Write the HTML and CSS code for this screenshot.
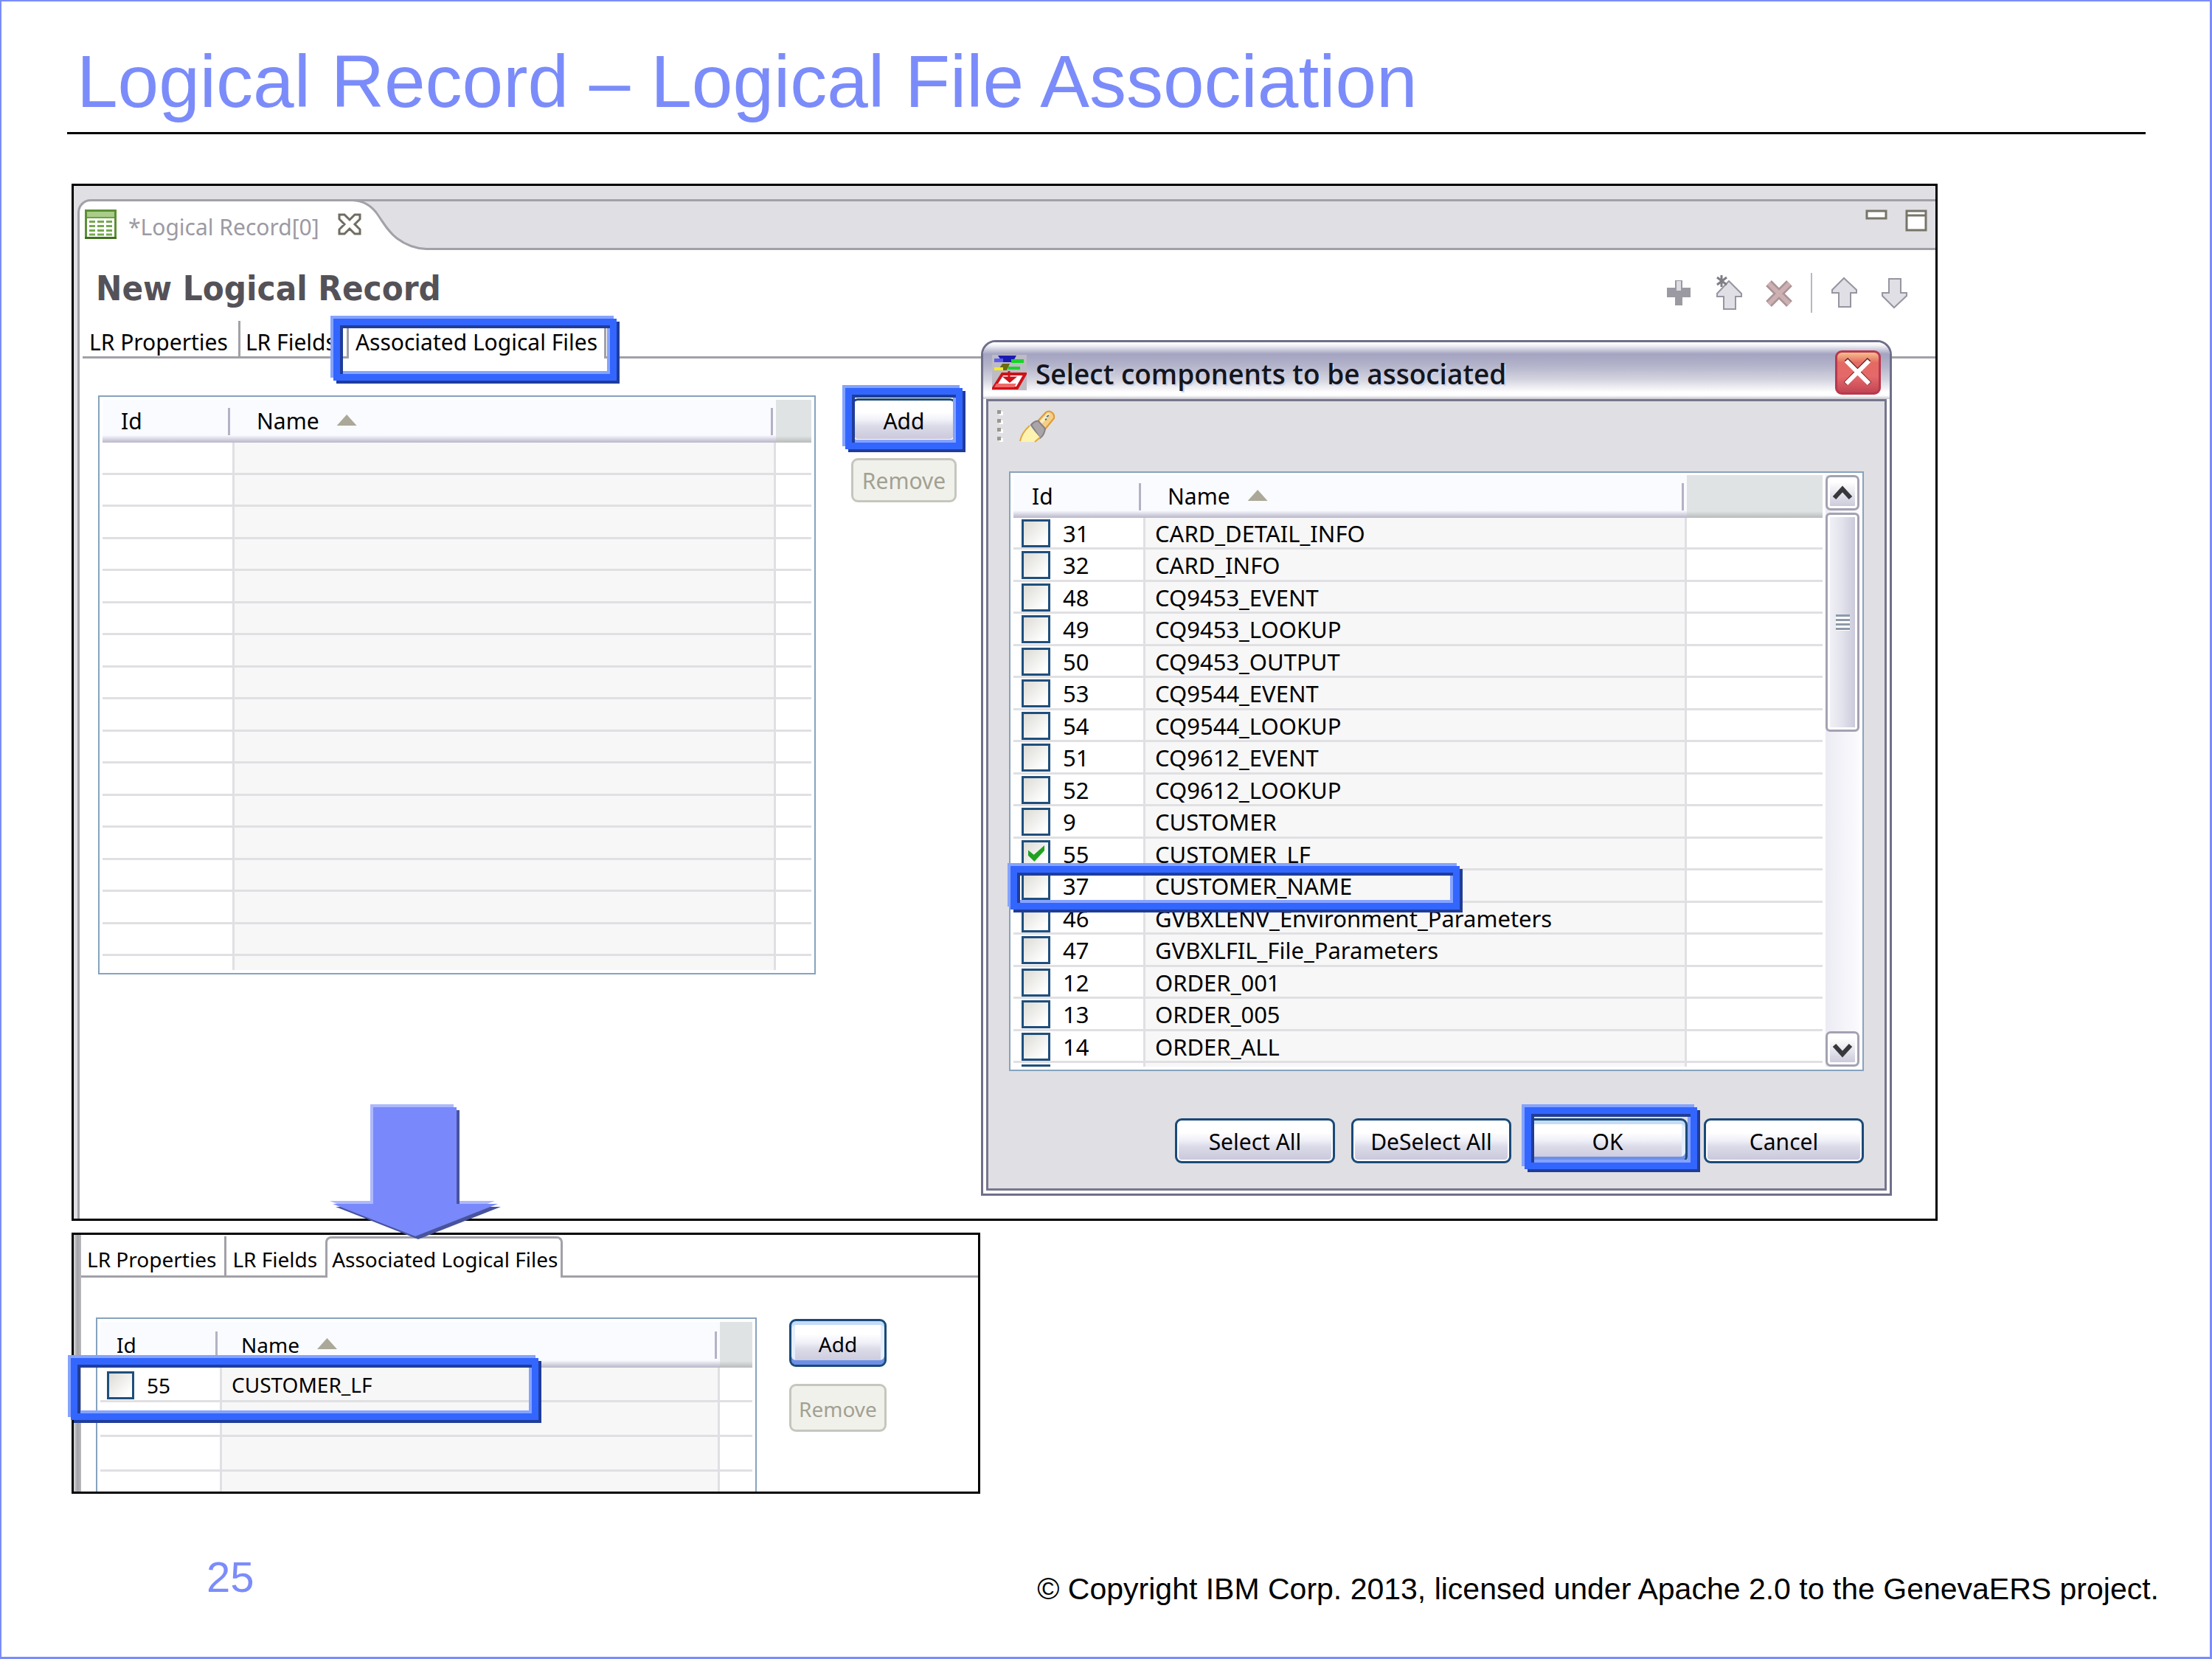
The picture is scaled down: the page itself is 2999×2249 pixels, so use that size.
FILE: index.html
```html
<!DOCTYPE html>
<html lang="en">
<head>
<meta charset="utf-8">
<title>Logical Record – Logical File Association</title>
<link rel="stylesheet" href="styles.css">
</head>
<body>
<main class="slide">
  <h1 class="slide-title">Logical Record – Logical File Association</h1>

  <section class="frame editor">
    <header class="editor-bar">
      <div class="editor-tab">
        <svg class="table-icon" viewBox="0 0 43 40" aria-hidden="true">
          <rect x="1.500" y="1.500" width="40" height="37" fill="#fff" stroke="#5c8f35" stroke-width="3"/>
          <rect x="3" y="3" width="37" height="7" fill="#a9cc88"/>
          <rect x="3" y="10" width="37" height="2" fill="#6ea045"/>
          <path d="M6 16.500h8M17 16.500h9M29 16.500h8M6 22.500h8M17 22.500h9M29 22.500h8M6 28.500h8M17 28.500h9M29 28.500h8M6 34h8M17 34h9M29 34h8" stroke="#76a850" stroke-width="3"/>
          <path d="M0 38.500h43" stroke="#3f6f1e" stroke-width="3"/>
        </svg>
        <span class="editor-name">*Logical Record[0]</span>
        <button class="tab-close" aria-label="Close editor">
          <svg viewBox="0 0 32 30" aria-hidden="true"><path d="M2 2h7l7 7 7-7h7v6l-7 7 7 7v6h-7l-7-7-7 7H2v-6l7-7-7-7z" fill="#fff" stroke="#6f6d62" stroke-width="3"/></svg>
        </button>
      </div>
      <svg class="tab-curve" viewBox="0 0 100 69" aria-hidden="true">
        <rect width="100" height="69" fill="#e0dfe3"/>
        <path d="M0 0C14 2 24 8 32 18C42 32 48 44 60 53C72 62 84 67 100 67V69H0Z" fill="#fff"/>
        <path d="M0 1.500H100M0 1.500C14 2 24 8 32 18C42 32 48 44 60 53C72 62 84 67 100 67.500" fill="none" stroke="#a2a1a8" stroke-width="3"/>
      </svg>
      <div class="editor-fill">
        <button class="view-button" aria-label="Minimize"><svg viewBox="0 0 30 30" aria-hidden="true"><rect x="2" y="2" width="26" height="10" fill="#fff" stroke="#77756a" stroke-width="3"/></svg></button>
        <button class="view-button" aria-label="Maximize"><svg viewBox="0 0 30 30" aria-hidden="true"><path d="M2 2h26v26H2zM2 8h26" fill="#fff" stroke="#77756a" stroke-width="3"/></svg></button>
      </div>
    </header>

    <div class="editor-body">
      <div class="heading-row">
        <h2 class="heading">New Logical Record</h2>
        <div class="toolbar">
          <button class="tool" aria-label="Add field"><svg viewBox="0 0 40 50" aria-hidden="true"><path d="M15 8h10v10h11v13H25v11H15V31H4V18h11z" fill="#9b99a1"/><path d="M17 9h6v13h-6z" fill="#dddce2"/></svg></button>
          <button class="tool" aria-label="Insert before"><svg viewBox="0 0 40 50" aria-hidden="true"><path d="M20 9L37 26v4h-8v17H13V30H4v-4z" fill="#e0dfe5" stroke="#9795a0" stroke-width="2"/><path d="M10 1v16M4 4l13 10M17 4L4 14" stroke="#7f7d87" stroke-width="3"/></svg></button>
          <button class="tool" aria-label="Delete"><svg viewBox="0 0 40 50" aria-hidden="true"><path d="M6 12L34 40M34 12L6 40" stroke="#ab9498" stroke-width="11"/><path d="M6 12L34 40M34 12L6 40" stroke="#cdb0b2" stroke-width="6"/></svg></button>
          <span class="separator"></span>
          <button class="tool" aria-label="Move up"><svg viewBox="0 0 40 50" aria-hidden="true"><path d="M20 5L37 21v4h-8v19H13V25H4v-4z" fill="#e0dfe5" stroke="#9795a0" stroke-width="2"/></svg></button>
          <button class="tool" aria-label="Move down"><svg viewBox="0 0 40 50" aria-hidden="true"><path d="M20 45L37 29v-4h-8V6H13v19H4v4z" fill="#e0dfe5" stroke="#9795a0" stroke-width="2"/></svg></button>
        </div>
      </div>

      <nav class="tabs">
        <a class="tab" href="#properties">LR Properties</a>
        <a class="tab" href="#fields">LR Fields</a>
        <a class="tab tab-selected" href="#files" aria-current="page">Associated Logical Files<span class="highlight highlight-tab"></span></a>
        <span class="tabs-rest"></span>
      </nav>

      <div class="panel">
        <div class="grid">
          <table class="data">
            <colgroup><col class="col-id"><col><col class="col-rest"></colgroup>
            <thead><tr><th>Id</th><th>Name<span class="sort"></span></th><th></th></tr></thead>
            <tbody>
              <tr><td></td><td></td><td></td></tr>
              <tr><td></td><td></td><td></td></tr>
              <tr><td></td><td></td><td></td></tr>
              <tr><td></td><td></td><td></td></tr>
              <tr><td></td><td></td><td></td></tr>
              <tr><td></td><td></td><td></td></tr>
              <tr><td></td><td></td><td></td></tr>
              <tr><td></td><td></td><td></td></tr>
              <tr><td></td><td></td><td></td></tr>
              <tr><td></td><td></td><td></td></tr>
              <tr><td></td><td></td><td></td></tr>
              <tr><td></td><td></td><td></td></tr>
              <tr><td></td><td></td><td></td></tr>
              <tr><td></td><td></td><td></td></tr>
              <tr><td></td><td></td><td></td></tr>
              <tr><td></td><td></td><td></td></tr>
              <tr class="row-cut"><td></td><td></td><td></td></tr>
            </tbody>
          </table>
        </div>
        <div class="side-buttons">
          <div class="marked"><button class="button">Add</button><span class="highlight highlight-add"></span></div>
          <button class="button" disabled>Remove</button>
        </div>
      </div>
    </div>

    <div class="dialog" role="dialog" aria-labelledby="dialog-title">
      <header class="dialog-bar">
        <svg class="dialog-icon" viewBox="0 0 47 48" aria-hidden="true">
          <rect width="47" height="48" fill="#bdbcc4"/>
          <path d="M8 1h25l-5 9H14z" fill="#1b1bb0"/><path d="M3 5h12v5H3z" fill="#5a5af0"/>
          <path d="M26 6h17v5H26zM22 16h16v4H22z" fill="#18d428"/>
          <path d="M14 12h10l-4 9H8z" fill="#6b6a10"/><path d="M3 17h12v4H3z" fill="#f5ee22"/>
          <path d="M14 26h31L34 45H2z" fill="#fff" stroke="#cf1218" stroke-width="4"/>
          <path d="M6 39h27l-3 5H3z" fill="#f06a6a"/>
          <path d="M23 22v10M18 31h12l-6 5z" stroke="#cf1218" stroke-width="3" fill="#cf1218"/>
        </svg>
        <h2 class="dialog-title" id="dialog-title">Select components to be associated</h2>
        <button class="dialog-close" aria-label="Close"><svg viewBox="0 0 56 54" aria-hidden="true"><path d="M12 9L44 42M43 9L11 42" stroke="#5a2020" stroke-width="6"/><path d="M12 11L43 42M43 11L12 42" stroke="#fff" stroke-width="6"/></svg></button>
      </header>
      <div class="dialog-body">
        <div class="dialog-tools">
          <svg class="grip" viewBox="0 0 8 44" aria-hidden="true"><path d="M3 2h5v5H3zM3 14h5v5H3zM3 26h5v5H3zM3 38h5v5H3z" fill="#fff"/><path d="M0 0h5v5H0zM0 12h5v5H0zM0 24h5v5H0zM0 36h5v5H0z" fill="#99978f"/></svg>
          <button class="search" aria-label="Search"><svg viewBox="0 0 50 44" aria-hidden="true">
            <path d="M24 16L36 3q4-3 8 0t3 8L34 27z" fill="#f6cf86" stroke="#dd9a33" stroke-width="2"/>
            <path d="M28 18L40 5" stroke="#fff0c8" stroke-width="4"/><path d="M37 9l3-2M35 13l2-1" stroke="#3d6f95" stroke-width="2"/>
            <path d="M16 20q5-6 10-5l9 10q-1 9-7 13z" fill="#aaa5a8" stroke="#857f84" stroke-width="2"/>
            <path d="M14 21l14 16-6 6H2q1-10 12-22z" fill="#fff3b0"/><path d="M14 21Q3 31 1 42M28 37l-7 6" stroke="#e0a83c" stroke-width="2" fill="none"/>
          </svg></button>
        </div>

        <div class="grid grid-scroll">
          <table class="data data-list">
            <colgroup><col class="col-id"><col><col class="col-wide"></colgroup>
            <thead><tr><th>Id</th><th>Name<span class="sort"></span></th><th></th></tr></thead>
            <tbody>
              <tr><td><input type="checkbox" id="c31"><label for="c31">31</label></td><td>CARD_DETAIL_INFO</td><td></td></tr>
              <tr><td><input type="checkbox" id="c32"><label for="c32">32</label></td><td>CARD_INFO</td><td></td></tr>
              <tr><td><input type="checkbox" id="c48"><label for="c48">48</label></td><td>CQ9453_EVENT</td><td></td></tr>
              <tr><td><input type="checkbox" id="c49"><label for="c49">49</label></td><td>CQ9453_LOOKUP</td><td></td></tr>
              <tr><td><input type="checkbox" id="c50"><label for="c50">50</label></td><td>CQ9453_OUTPUT</td><td></td></tr>
              <tr><td><input type="checkbox" id="c53"><label for="c53">53</label></td><td>CQ9544_EVENT</td><td></td></tr>
              <tr><td><input type="checkbox" id="c54"><label for="c54">54</label></td><td>CQ9544_LOOKUP</td><td></td></tr>
              <tr><td><input type="checkbox" id="c51"><label for="c51">51</label></td><td>CQ9612_EVENT</td><td></td></tr>
              <tr><td><input type="checkbox" id="c52"><label for="c52">52</label></td><td>CQ9612_LOOKUP</td><td></td></tr>
              <tr><td><input type="checkbox" id="c9"><label for="c9">9</label></td><td>CUSTOMER</td><td></td></tr>
              <tr><td><input type="checkbox" id="c55" checked><label for="c55">55</label></td><td>CUSTOMER_LF</td><td></td></tr>
              <tr><td><input type="checkbox" id="c37"><label for="c37">37</label><span class="highlight highlight-row"></span></td><td>CUSTOMER_NAME</td><td></td></tr>
              <tr><td><input type="checkbox" id="c46"><label for="c46">46</label></td><td>GVBXLENV_Environment_Parameters</td><td></td></tr>
              <tr><td><input type="checkbox" id="c47"><label for="c47">47</label></td><td>GVBXLFIL_File_Parameters</td><td></td></tr>
              <tr><td><input type="checkbox" id="c12"><label for="c12">12</label></td><td>ORDER_001</td><td></td></tr>
              <tr><td><input type="checkbox" id="c13"><label for="c13">13</label></td><td>ORDER_005</td><td></td></tr>
              <tr><td><input type="checkbox" id="c14"><label for="c14">14</label></td><td>ORDER_ALL</td><td></td></tr>
              <tr class="row-sliver"><td><div class="box-edge"></div></td><td></td><td></td></tr>
            </tbody>
          </table>
          <div class="scrollbar">
            <button class="scroll-button" aria-label="Scroll up"><svg viewBox="0 0 40 42" aria-hidden="true"><path d="M9 28L20 16L31 28" fill="none" stroke="#37373c" stroke-width="6"/></svg></button>
            <div class="thumb"><span class="thumb-grip"></span></div>
            <button class="scroll-button scroll-down" aria-label="Scroll down"><svg viewBox="0 0 40 42" aria-hidden="true"><path d="M9 16L20 28L31 16" fill="none" stroke="#37373c" stroke-width="6"/></svg></button>
          </div>
        </div>

        <div class="dialog-buttons">
          <button class="button">Select All</button>
          <button class="button">DeSelect All</button>
          <div class="marked"><button class="button button-default">OK</button><span class="highlight highlight-ok"></span></div>
          <button class="button">Cancel</button>
        </div>
      </div>
    </div>
  </section>

  <section class="frame result">
    <svg class="arrow" viewBox="0 0 232 184" aria-hidden="true">
      <path d="M55 0H168V131H224L112 175L0 131H55Z" fill="#adb8fc"/>
      <path d="M63 8H176V139H232L120 183L8 139H63Z" fill="#48539c"/>
      <path d="M59 4H172V135H228L116 179L4 135H59Z" fill="#7989fb"/>
    </svg>
    <nav class="tabs">
      <a class="tab" href="#properties">LR Properties</a>
      <a class="tab" href="#fields">LR Fields</a>
      <a class="tab tab-selected" href="#files" aria-current="page">Associated Logical Files</a>
      <span class="tabs-rest"></span>
    </nav>
    <div class="panel">
      <div class="grid">
        <table class="data data-list">
          <colgroup><col class="col-id"><col><col class="col-rest"></colgroup>
          <thead><tr><th>Id</th><th>Name<span class="sort"></span></th><th></th></tr></thead>
          <tbody>
            <tr><td><input type="checkbox" id="r55"><label for="r55">55</label><span class="highlight highlight-result"></span></td><td>CUSTOMER_LF</td><td></td></tr>
            <tr><td></td><td></td><td></td></tr>
            <tr><td></td><td></td><td></td></tr>
            <tr class="row-cut"><td></td><td></td><td></td></tr>
          </tbody>
        </table>
      </div>
      <div class="side-buttons">
        <button class="button button-default">Add</button>
        <button class="button" disabled>Remove</button>
      </div>
    </div>
  </section>

  <footer class="slide-footer">
    <span class="page-number">25</span>
    <span class="copyright">© Copyright IBM Corp. 2013, licensed under Apache 2.0 to the GenevaERS project.</span>
  </footer>
</main>
</body>
</html>
```
FILE: styles.css
```css
*, *::before, *::after { box-sizing: border-box; }

body {
  margin: 0;
  background: #fff;
  color: #000;
  font-family: "Noto Sans", sans-serif;
  font-size: 30px;
}

button { font: inherit; color: inherit; }
svg { display: block; }

.slide {
  display: flex;
  flex-direction: column;
  min-height: 100vh;
  border: 2px solid #7b8cfa;
  border-width: 2px 3px 3px 2px;
  font-family: "Liberation Sans", Arial, sans-serif;
}

.slide-title {
  margin: 50px 87px 67px 89px;
  padding: 0 0 11px 13px;
  border-bottom: 3px solid #000;
  color: #7b8cfa;
  font-size: 100px;
  font-weight: 400;
  line-height: 116px;
}

/* Framed captures */
.frame {
  position: relative;
  border: 3px solid #000;
  background: #fff;
  font-family: "Noto Sans", sans-serif;
}
.editor { margin: 0 369px 0 95px; background: #e0dfe3; }
.result {
  width: 1232px;
  margin: 16px 0 0 95px;
  padding: 2px 0 0 10px;
  background: linear-gradient(to right, #d9d9dc 0, #a3a3a7 5px, #b9b9bd 10px, #fff 10px);
  font-size: 28px;
}

/* Editor tab strip */
.editor-bar { display: flex; padding: 18px 0 0 5px; }
.editor-tab {
  display: flex;
  align-items: center;
  gap: 16px;
  width: 373px;
  height: 69px;
  padding: 0 0 4px 7px;
  border: 3px solid #a2a1a8;
  border-width: 3px 0 0 3px;
  border-top-left-radius: 18px;
  background: #fff;
  color: #9c9aa3;
}
.table-icon { width: 43px; height: 40px; }
.editor-name { flex: 1; white-space: nowrap; padding-top: 6px; }
.tab-close { z-index: 1; flex: none; width: 32px; height: 30px; margin-right: -12px; padding: 0; border: 0; background: none; }
.tab-curve { width: 100px; height: 69px; }
.editor-fill {
  display: flex;
  flex: 1;
  justify-content: flex-end;
  gap: 24px;
  padding: 11px 11px 0 0;
  border: 3px solid #a2a1a8;
  border-width: 3px 0;
}
.view-button { width: 30px; height: 30px; padding: 0; border: 0; background: none; }

.editor-body { margin-left: 5px; border-left: 3px solid #a2a1a8; background: #fff; }

.heading-row { display: flex; justify-content: space-between; height: 96px; padding: 8px 36px 0 22px; align-items: center; }
.heading {
  margin: 0;
  color: #545258;
  font: bold 47px/56px "DejaVu Sans Condensed", "DejaVu Sans", sans-serif;
}
.toolbar { display: flex; align-items: center; gap: 28px; padding-top: 12px; }
.tool { width: 40px; height: 50px; padding: 0; border: 0; background: none; }
.separator { width: 2px; height: 54px; margin: 0 -5px; background: #b9b7c2; }

/* Tabs */
.tabs { display: flex; height: 51px; padding-left: 4px; }
.result .tabs { height: 56px; padding-left: 0; }
.tab {
  position: relative;
  padding: 5px 14px 0 9px;
  border: 3px solid #a2a1a8;
  border-width: 0 3px 3px 0;
  color: #000;
  line-height: 48px;
  text-decoration: none;
  white-space: nowrap;
}
.tab:nth-child(2) { padding-left: 7px; border-right: 0; }
.tab-selected { padding: 2px 9px 0 9px; border-width: 3px 3px 0; border-radius: 8px 8px 0 0; }
.result .tab { padding: 7px 11px 0 8px; line-height: 48px; }
.result .tab-selected { padding: 4px 4px 0 6px; }
.tabs-rest { flex: 1; border-bottom: 3px solid #a2a1a8; }

.panel { display: flex; align-items: flex-start; gap: 48px; padding: 50px 0 331px 25px; }
.result .panel { gap: 44px; padding: 54px 0 0 20px; }

/* Data grids */
.grid { width: 973px; padding: 4px; border: 2px solid #86a3be; background: #fff; }
.grid-scroll { display: flex; align-items: stretch; gap: 4px; width: auto; padding: 3px 4px 4px; }
.result .grid { width: 896px; border-bottom: 0; padding-bottom: 0; }
.data { width: 100%; border-collapse: separate; border-spacing: 0; table-layout: fixed; }
.grid-scroll .data { flex: 1; width: auto; }
.col-id { width: 179px; }
.col-rest { width: 48px; }
.col-wide { width: 184px; }
.result .col-id { width: 165px; }
.result .col-rest { width: 44px; }

.data th {
  height: 58px;
  padding: 0 0 0 26px;
  background:
    linear-gradient(#b5b1c5, #b5b1c5) right 4px center / 3px 37px no-repeat,
    linear-gradient(to bottom, #f9fbff calc(100% - 10px), #d8d7e4 calc(100% - 5px), #b9b6c8 100%);
  font-weight: 400;
  line-height: 48px;
  text-align: left;
  white-space: nowrap;
}
.data th:first-child { background-position: right 6px center, 0 0; padding-left: 25px; }
.data th:nth-child(2) { padding-left: 30px; }
.data th:last-child { background: linear-gradient(to bottom, #dfe3e3 calc(100% - 9px), #b9bbbb 100%); }
.result .data th { height: 62px; }
.result .data th:first-child { padding-left: 22px; }
.result .data th:nth-child(2) { padding-left: 26px; }
.sort {
  display: inline-block;
  width: 27px;
  height: 15px;
  margin-left: 24px;
  background: #aca899;
  clip-path: polygon(50% 0, 100% 100%, 0 100%);
  vertical-align: 5px;
}
.data td {
  position: relative;
  height: 44px;
  padding: 0;
  border: solid #e0dfe3;
  border-width: 0 3px 3px 0;
  line-height: 38px;
  vertical-align: top;
  white-space: nowrap;
}
.data tr:nth-child(even) td { height: 43px; }
.data td:nth-child(2) { background: #f7f7f7; padding-left: 12px; }
.data td:last-child { border-right: 0; }
.data .row-cut td { height: 19px; border-bottom: 0; }

.data-list td { font-size: 31px; }
.data-list tr:nth-child(odd) td { height: 43px; }
.data-list tr:nth-child(even) td { height: 44px; }
.data-list tr td:nth-child(2) { padding-top: 2px; padding-left: 13px; }
.data-list td:first-child { padding: 0 0 0 11px; }
.data-list tr.row-sliver:last-child td { height: 5px; padding-top: 0; border-bottom: 0; line-height: 0; }
.box-edge { width: 39px; height: 3px; margin-top: 2px; background: #1f4f7c; }

.result .data td { font-size: 28px; }
.result .data tbody td { height: 47px; }
.result .data td:nth-child(2) { padding-top: 4px; }
.result .data .row-cut td { height: 27px; }
.result .data td:first-child { padding: 3px 0 0 9px; }

input[type="checkbox"] {
  appearance: none;
  float: left;
  width: 39px;
  height: 38px;
  margin: 2px 17px 0 0;
  border: 3px solid #1f4f7c;
  background: linear-gradient(135deg, #dcdbd5, #fff 85%);
}
.result input[type="checkbox"] { width: 37px; }
input[type="checkbox"]:checked::after {
  content: "";
  display: block;
  width: 22px;
  height: 22px;
  margin: 4px 6px;
  background: #21a121;
  clip-path: polygon(0 30%, 35% 58%, 100% 0, 100% 32%, 38% 100%, 0 62%);
}
.data label { display: block; padding-top: 2px; }

/* Scrollbar */
.scrollbar {
  display: flex;
  flex-direction: column;
  gap: 3px;
  width: 46px;
  background: linear-gradient(to right, #ebebf3, #fbfbfe);
}
.scroll-button {
  height: 48px;
  padding: 0;
  border: 3px solid #a3a2b2;
  border-radius: 7px;
  background: linear-gradient(to bottom, #fff 15%, #c6c6d8);
  box-shadow: inset 0 0 0 3px #fff;
}
.scroll-button svg { width: 40px; height: 42px; }
.scroll-down { margin-top: auto; }
.thumb {
  display: flex;
  align-items: center;
  justify-content: center;
  height: 297px;
  border: 3px solid #a3a2b2;
  border-radius: 6px;
  background: linear-gradient(to right, #f2f2f7, #e2e2ec 50%, #c6c6d8);
  box-shadow: inset 0 0 0 3px #fff;
}
.thumb-grip { width: 19px; height: 22px; background: repeating-linear-gradient(to bottom, #8d9aa8 0 3px, #fff 3px 6px); }

/* Push buttons */
.button {
  display: block;
  width: 143px;
  height: 60px;
  padding: 2px 0 0;
  border: 3px solid #1a4a78;
  border-radius: 9px;
  background: linear-gradient(to bottom, #fff 30%, #efeff8 50%, #dadae8 65%, #c9c7da);
  box-shadow: inset 0 0 0 2px #fff;
  line-height: 48px;
}
.button:disabled { border-color: #c6c6be; background: #f1f1ec; box-shadow: none; color: #a1a192; }
.button-default { box-shadow: inset 0 5px 0 #c3dcf8, inset 0 -6px 0 #6d8fe8, inset 5px 0 0 #e4eefc, inset -5px 0 0 #e4eefc; }
.side-buttons { display: flex; flex-direction: column; gap: 21px; padding-top: 4px; }
.result .side-buttons { gap: 23px; padding-top: 2px; }
.result .button { width: 132px; height: 65px; }
.marked { position: relative; }

/* Bevelled callout boxes */
.highlight {
  position: absolute;
  z-index: 2;
  border: 9px solid #3366ff;
  box-shadow: -4px -4px 0 #85a3ff, 4px 4px 0 #1f3d99, inset 4px 4px 0 #1f3d99, inset -4px -4px 0 #85a3ff;
  pointer-events: none;
}
.highlight-tab { inset: -6px -17px -30px -21px; }
.highlight-add { inset: -14px -8px -9px -8px; }
.highlight-ok { inset: -15px -13px -8px -4px; }
.highlight-row { top: -6px; left: -4px; width: 609px; height: 59px; }
.highlight-result { top: -13px; left: -40px; width: 634px; height: 84px; }

.arrow { position: absolute; z-index: 3; top: -177px; left: 347px; width: 232px; height: 184px; }

/* Dialog window */
.dialog {
  position: absolute;
  top: 209px;
  right: 59px;
  width: 1235px;
  border: 3px solid #6f6e8a;
  border-radius: 20px 20px 0 0;
  background: #fff;
}
.dialog-bar {
  display: flex;
  align-items: center;
  gap: 12px;
  height: 77px;
  padding: 4px 12px 0;
  border-radius: 17px 17px 0 0;
  background: linear-gradient(to bottom, #fff 0, #f4f4f8 4px, #a4a3c1 16px, #b4b4cb 32px, #d2d2df 50px, #fff 68px, #fff 72px, #c5c4cf 100%);
}
.dialog-icon { width: 47px; height: 48px; }
.dialog-title {
  flex: 1;
  margin: 0;
  padding-top: 4px;
  color: #15151c;
  font: 600 37px/48px "Open Sans", "Noto Sans", sans-serif;
  text-shadow: 2px 2px 0 #c9d3e8;
}
.dialog-close {
  width: 62px;
  height: 60px;
  padding: 0;
  border: 3px solid #b8384e;
  border-radius: 9px;
  background: linear-gradient(to bottom, #f5c08c, #e46a62 25%, #e5686a 60%, #c24555);
}
.dialog-close svg { width: 56px; height: 54px; }
.dialog-body { margin: 0 4px 4px; padding: 12px 28px 34px; border: 3px solid #77768e; background: #e0dfe3; }
.dialog-tools { display: flex; gap: 22px; margin: 0 0 39px -16px; }
.grip { width: 8px; height: 44px; }
.search { width: 50px; height: 44px; padding: 0; border: 0; background: none; }
.dialog-buttons { display: flex; justify-content: flex-end; gap: 22px; margin-top: 64px; }
.dialog-buttons .button { width: 217px; height: 61px; }

.slide-footer {
  display: flex;
  align-items: center;
  justify-content: space-between;
  margin-top: auto;
  padding: 0 69px 68px 278px;
}
.page-number { color: #7b8cfa; font-size: 58px; line-height: 64px; }
.copyright { padding-top: 32px; font-size: 41px; line-height: 48px; }
```
